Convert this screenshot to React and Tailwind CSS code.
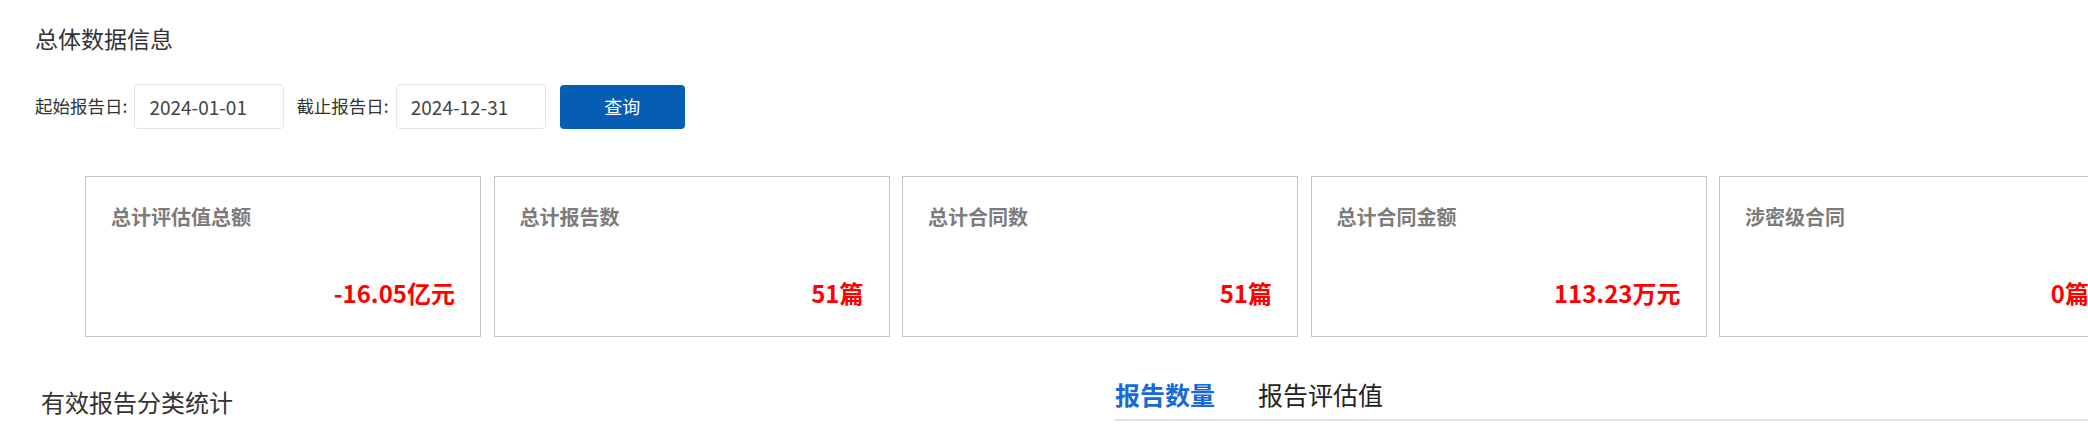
import React, { useState } from "react";

const cards = [
  { title: "总计评估值总额", value: "-16.05亿元" },
  { title: "总计报告数", value: "51篇" },
  { title: "总计合同数", value: "51篇" },
  { title: "总计合同金额", value: "113.23万元" },
  { title: "涉密级合同", value: "0篇" },
];

const StatCard = ({ title, value }) => (
  <div className="w-[396px] h-[161px] shrink-0 border border-[#c6c6c6] bg-white flex flex-col px-[25px] pt-[25px]">
    <div className="text-[20px] leading-[30px] font-bold text-[#7c7c7c]">{title}</div>
    <div className="mt-[43px] text-right text-[24px] leading-[36px] font-bold text-[#ff0000]">
      {value}
    </div>
  </div>
);

export default function App() {
  let [start, setStart] = useState("2024-01-01");
  let [end, setEnd] = useState("2024-12-31");
  let [tab, setTab] = useState(0);

  return (
    <div
      className="w-full h-[425px] overflow-hidden bg-white text-[#333]"
      style={{ fontFamily: '"Noto Sans CJK SC", "Noto Sans", sans-serif' }}
    >
      <div className="pl-[35px] pt-[21px]">
        <h2 className="text-[23px] leading-[34px] font-normal text-[#333]">总体数据信息</h2>

        <form className="mt-[29px] flex items-center h-[45px]" onSubmit={(e) => e.preventDefault()}>
          <label className="text-[17.5px] text-[#333] whitespace-nowrap">起始报告日:</label>
          <input
            type="text"
            value={start}
            onChange={(e) => setStart(e.target.value)}
            className="ml-[7px] w-[150px] h-[45px] border border-[#dfe6f2] rounded-[4px] px-[14px] text-[19px] text-[#444] outline-none"
          />
          <label className="ml-[12px] text-[17.5px] text-[#333] whitespace-nowrap">截止报告日:</label>
          <input
            type="text"
            value={end}
            onChange={(e) => setEnd(e.target.value)}
            className="ml-[7px] w-[150px] h-[45px] border border-[#dfe6f2] rounded-[4px] px-[14px] text-[19px] text-[#444] outline-none"
          />
          <button
            type="submit"
            className="ml-[14px] w-[125px] h-[44px] rounded-[4px] bg-[#055eb4] text-white text-[18px]"
          >
            查询
          </button>
        </form>

        <div className="mt-[47px] ml-[50px] flex gap-[12.5px]">
          {cards.map((c) => (
            <StatCard key={c.title} title={c.title} value={c.value} />
          ))}
        </div>
      </div>

      <div className="mt-[39px] flex">
        <div className="w-[1115px] pl-[41px] pt-[8px]">
          <div className="text-[24px] leading-[36px] text-[#333]">有效报告分类统计</div>
        </div>
        <div className="flex-1 flex gap-[43px] border-b-2 border-[#e4e4e4] h-[45px]">
          {["报告数量", "报告评估值"].map((t, i) => (
            <div
              key={t}
              onClick={() => setTab(i)}
              className={
                "text-[25px] leading-[37px] pb-[6px] cursor-pointer " +
                (tab === i ? "font-bold text-[#1769d9]" : "text-[#222]")
              }
            >
              {t}
            </div>
          ))}
        </div>
      </div>
    </div>
  );
}
